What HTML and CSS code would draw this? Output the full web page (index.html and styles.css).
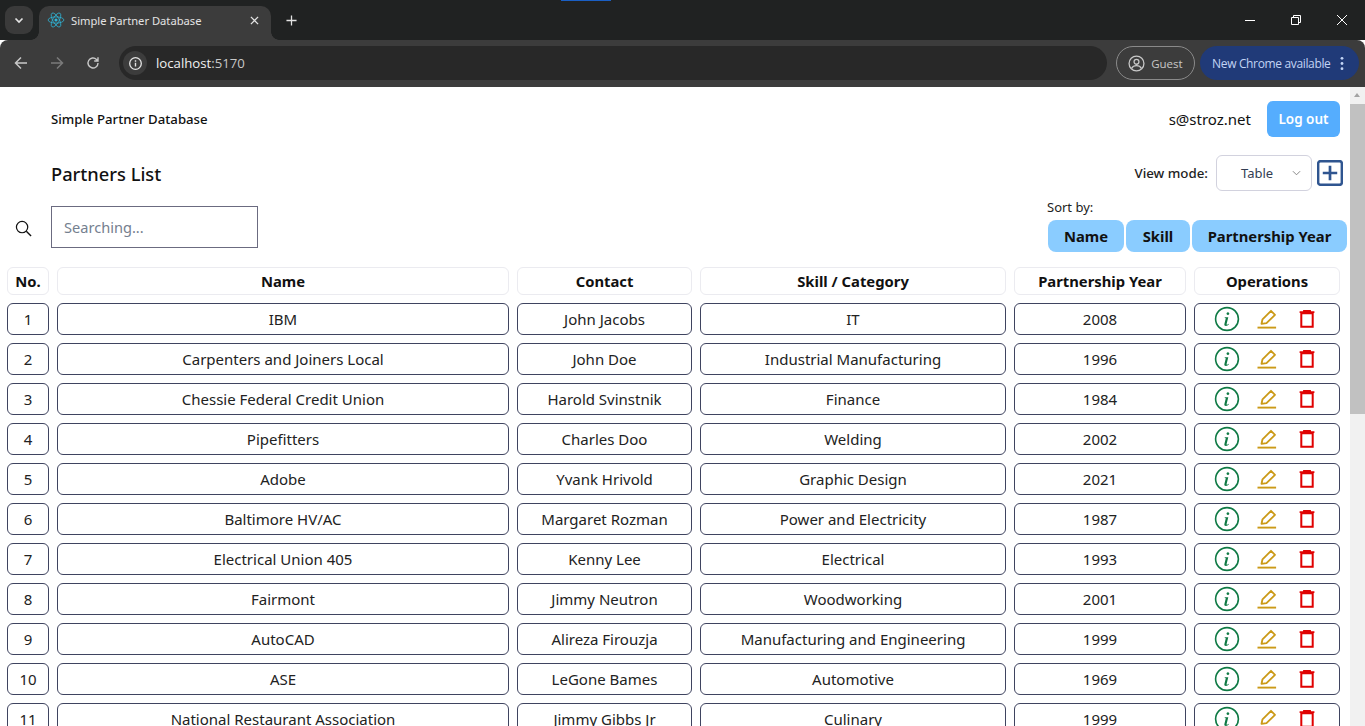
FILE: index.html
```html
<!DOCTYPE html>
<html lang="en">
<head>
<meta charset="utf-8">
<title>Simple Partner Database</title>
<link rel="stylesheet" href="styles.css">
</head>
<body>
<svg class="defs" aria-hidden="true">
  <symbol id="i-info" viewBox="0 0 26 26">
    <circle cx="13" cy="13" r="11.4" fill="none" stroke="#0f7a45" stroke-width="1.6"/>
    <path d="M13.9 6.2a1.4 1.4 0 1 0 .01 0zM10.800 11.200h3.500l-1.700 6.700c-.2.8.4 1 1 .6l1-.8.3.5c-1 1-1.900 1.700-3 1.700-1.300 0-1.800-.8-1.500-2l1.400-5.600-1.100-.2z" fill="#0f7a45"/>
  </symbol>
  <symbol id="i-edit" viewBox="0 0 22 22">
    <path d="M5.500 15.800l1-4.500L15 2.800l4 4-8.500 8.300z" fill="none" stroke="#cb9a18" stroke-width="1.800" stroke-linejoin="round"/>
    <path d="M1.500 19.600h18.600" stroke="#cb9a18" stroke-width="1.900"/>
  </symbol>
  <symbol id="i-trash" viewBox="0 0 18 20">
    <path d="M1.600 3.200h14.800M6 3V1.800h6V3" fill="none" stroke="#e00000" stroke-width="1.800"/>
    <path d="M3.300 4.200h11.400v13.500H3.300z" fill="none" stroke="#e00000" stroke-width="2"/>
  </symbol>
</svg>

<div class="browser">
  <header class="tabstrip">
    <div class="tab-search"><svg viewBox="0 0 12 12" class="tab-chevron"><path d="M2.500 4.500L6 8l3.500-3.500" fill="none" stroke="#e3e3e3" stroke-width="1.700"/></svg></div>
    <div class="tab">
      <svg class="react" viewBox="-12 -12 24 24">
        <circle r="2.100" fill="#2fb5d8"/>
        <g fill="none" stroke="#2fb5d8" stroke-width="1">
          <ellipse rx="10.500" ry="4.200"/>
          <ellipse rx="10.500" ry="4.200" transform="rotate(60)"/>
          <ellipse rx="10.500" ry="4.200" transform="rotate(120)"/>
        </g>
      </svg>
      <span class="tab-title">Simple Partner Database</span>
      <svg class="tab-close" viewBox="0 0 10 10"><path d="M1 1l8 8M9 1l-8 8" stroke="#e3e3e3" stroke-width="1.400"/></svg>
    </div>
    <svg class="tab-new" viewBox="0 0 12 12"><path d="M6 .5v11M.5 6h11" stroke="#e3e3e3" stroke-width="1.400"/></svg>
    <div class="win-controls">
      <svg viewBox="0 0 12 12"><path d="M1 6.500h10" stroke="#fff" stroke-width="1"/></svg>
      <svg viewBox="0 0 12 12"><path d="M1.500 3.500h7v7h-7zM3.500 3.500v-2h7v7h-2" fill="none" stroke="#fff" stroke-width="1"/></svg>
      <svg viewBox="0 0 12 12"><path d="M1 1l10 10M11 1L1 11" stroke="#fff" stroke-width="1"/></svg>
    </div>
  </header>
  <nav class="toolbar">
    <svg class="nav-ico" viewBox="0 0 14 14"><path d="M13 7H2M7 1.500L1.500 7 7 12.500" fill="none" stroke="#c7c7c7" stroke-width="1.500"/></svg>
    <svg class="nav-ico" viewBox="0 0 14 14"><path d="M1 7h11M7 1.500L12.500 7 7 12.500" fill="none" stroke="#7b7b7b" stroke-width="1.500"/></svg>
    <svg class="nav-ico" viewBox="0 0 14 14"><path d="M12 7a5 5 0 1 1-1.500-3.600L12 5M12 1.200V5H8.200" fill="none" stroke="#c7c7c7" stroke-width="1.400"/></svg>
    <div class="omnibox">
      <span class="site-info"><svg viewBox="0 0 16 16"><circle cx="8" cy="8" r="6.200" fill="none" stroke="#e3e3e3" stroke-width="1.400"/><path d="M8 7.200v4M8 4.400V6" stroke="#e3e3e3" stroke-width="1.500"/></svg></span>
      <span class="url"><span class="url-host">localhost</span>:5170</span>
    </div>
    <div class="guest">
      <svg viewBox="0 0 16 16"><circle cx="8" cy="8" r="7" fill="none" stroke="#c7c7c7" stroke-width="1.200"/><circle cx="8" cy="6.400" r="2.300" fill="none" stroke="#c7c7c7" stroke-width="1.200"/><path d="M3.400 12.600c1-2 2.800-2.600 4.600-2.600s3.600.6 4.600 2.600" fill="none" stroke="#c7c7c7" stroke-width="1.200"/></svg>
      <span>Guest</span>
    </div>
    <div class="update">
      <span>New Chrome available</span>
      <svg viewBox="0 0 4 16"><circle cx="2" cy="2.500" r="1.500" fill="#c2d4f5"/><circle cx="2" cy="8" r="1.500" fill="#c2d4f5"/><circle cx="2" cy="13.500" r="1.500" fill="#c2d4f5"/></svg>
    </div>
  </nav>
  <div class="viewport">
    <main class="page">
      <div class="topbar">
        <span class="brand">Simple Partner Database</span>
        <div class="account">
          <span class="email">s@stroz.net</span>
          <button class="logout">Log out</button>
        </div>
      </div>
      <div class="titlebar">
        <h1 class="page-title">Partners List</h1>
        <div class="view-tools">
          <span class="view-label">View mode:</span>
          <div class="select"><span>Table</span><svg viewBox="0 0 10 6"><path d="M1 1l4 4 4-4" fill="none" stroke="#7a7a7a" stroke-width="1"/></svg></div>
          <svg class="add" viewBox="0 0 27 27"><rect x="1.200" y="1.200" width="24.600" height="24.600" rx="2.500" fill="none" stroke="#2f5590" stroke-width="2.600"/><path d="M13.500 6v15M6 13.500h15" stroke="#2f5590" stroke-width="2.800"/></svg>
        </div>
      </div>
      <div class="filterbar">
        <svg class="search-ico" viewBox="0 0 18 18"><circle cx="7.500" cy="7.500" r="6" fill="none" stroke="#111" stroke-width="1.300"/><path d="M12 12l5 5" stroke="#111" stroke-width="1.500"/></svg>
        <div class="search-box">Searching...</div>
        <div class="sort">
          <span class="sort-label">Sort by:</span>
          <div class="sort-buttons">
            <button class="sort-btn sort-name">Name</button>
            <button class="sort-btn sort-skill">Skill</button>
            <button class="sort-btn sort-year">Partnership Year</button>
          </div>
        </div>
      </div>
      <div class="table">
        <div class="th">No.</div><div class="th">Name</div><div class="th">Contact</div><div class="th">Skill / Category</div><div class="th">Partnership Year</div><div class="th">Operations</div>

        <div class="td">1</div><div class="td">IBM</div><div class="td">John Jacobs</div><div class="td">IT</div><div class="td">2008</div>
        <div class="td ops"><svg class="op-info"><use href="#i-info"/></svg><svg class="op-edit"><use href="#i-edit"/></svg><svg class="op-trash"><use href="#i-trash"/></svg></div>

        <div class="td">2</div><div class="td">Carpenters and Joiners Local</div><div class="td">John Doe</div><div class="td">Industrial Manufacturing</div><div class="td">1996</div>
        <div class="td ops"><svg class="op-info"><use href="#i-info"/></svg><svg class="op-edit"><use href="#i-edit"/></svg><svg class="op-trash"><use href="#i-trash"/></svg></div>

        <div class="td">3</div><div class="td">Chessie Federal Credit Union</div><div class="td">Harold Svinstnik</div><div class="td">Finance</div><div class="td">1984</div>
        <div class="td ops"><svg class="op-info"><use href="#i-info"/></svg><svg class="op-edit"><use href="#i-edit"/></svg><svg class="op-trash"><use href="#i-trash"/></svg></div>

        <div class="td">4</div><div class="td">Pipefitters</div><div class="td">Charles Doo</div><div class="td">Welding</div><div class="td">2002</div>
        <div class="td ops"><svg class="op-info"><use href="#i-info"/></svg><svg class="op-edit"><use href="#i-edit"/></svg><svg class="op-trash"><use href="#i-trash"/></svg></div>

        <div class="td">5</div><div class="td">Adobe</div><div class="td">Yvank Hrivold</div><div class="td">Graphic Design</div><div class="td">2021</div>
        <div class="td ops"><svg class="op-info"><use href="#i-info"/></svg><svg class="op-edit"><use href="#i-edit"/></svg><svg class="op-trash"><use href="#i-trash"/></svg></div>

        <div class="td">6</div><div class="td">Baltimore HV/AC</div><div class="td">Margaret Rozman</div><div class="td">Power and Electricity</div><div class="td">1987</div>
        <div class="td ops"><svg class="op-info"><use href="#i-info"/></svg><svg class="op-edit"><use href="#i-edit"/></svg><svg class="op-trash"><use href="#i-trash"/></svg></div>

        <div class="td">7</div><div class="td">Electrical Union 405</div><div class="td">Kenny Lee</div><div class="td">Electrical</div><div class="td">1993</div>
        <div class="td ops"><svg class="op-info"><use href="#i-info"/></svg><svg class="op-edit"><use href="#i-edit"/></svg><svg class="op-trash"><use href="#i-trash"/></svg></div>

        <div class="td">8</div><div class="td">Fairmont</div><div class="td">Jimmy Neutron</div><div class="td">Woodworking</div><div class="td">2001</div>
        <div class="td ops"><svg class="op-info"><use href="#i-info"/></svg><svg class="op-edit"><use href="#i-edit"/></svg><svg class="op-trash"><use href="#i-trash"/></svg></div>

        <div class="td">9</div><div class="td">AutoCAD</div><div class="td">Alireza Firouzja</div><div class="td">Manufacturing and Engineering</div><div class="td">1999</div>
        <div class="td ops"><svg class="op-info"><use href="#i-info"/></svg><svg class="op-edit"><use href="#i-edit"/></svg><svg class="op-trash"><use href="#i-trash"/></svg></div>

        <div class="td">10</div><div class="td">ASE</div><div class="td">LeGone Bames</div><div class="td">Automotive</div><div class="td">1969</div>
        <div class="td ops"><svg class="op-info"><use href="#i-info"/></svg><svg class="op-edit"><use href="#i-edit"/></svg><svg class="op-trash"><use href="#i-trash"/></svg></div>

        <div class="td">11</div><div class="td">National Restaurant Association</div><div class="td">Jimmy Gibbs Jr</div><div class="td">Culinary</div><div class="td">1999</div>
        <div class="td ops"><svg class="op-info"><use href="#i-info"/></svg><svg class="op-edit"><use href="#i-edit"/></svg><svg class="op-trash"><use href="#i-trash"/></svg></div>
      </div>
    </main>
    <aside class="scrollbar">
      <div class="scroll-arrow"></div>
      <div class="scroll-thumb"></div>
    </aside>
  </div>
</div>
</body>
</html>
```

FILE: styles.css
```css
* { box-sizing: border-box; }
html, body { margin: 0; height: 100%; overflow: hidden; }
body { font-family: "Noto Sans", "Open Sans", sans-serif; color: #111; background: #fff; }
.defs { display: none; }
button { font-family: inherit; border: 0; cursor: pointer; }

.browser { display: flex; flex-direction: column; height: 100vh; }

/* Tab strip */
.tabstrip { height: 40px; flex: none; background: #202222; display: flex; align-items: center; color: #e3e3e3; padding-left: 5px; position: relative; }
.tabstrip::before { content: ""; position: absolute; left: 561px; top: 0; width: 50px; height: 1px; background: #1a5fc4; }
.tab-search { width: 28px; height: 28px; border-radius: 9px; background: #3a3a3a; display: flex; align-items: center; justify-content: center; }
.tab-chevron { width: 12px; height: 12px; }
.tab { width: 232px; height: 34px; margin-top: 6px; margin-left: 6px; border-radius: 10px 10px 0 0; background: #3c3c3c; display: flex; align-items: center; padding: 0 0 6px 8px; position: relative; }
.tab::before, .tab::after { content: ""; position: absolute; bottom: 0; width: 8px; height: 8px; }
.tab::before { left: -8px; background: radial-gradient(circle at 0 0, transparent 7.500px, #3c3c3c 8px); }
.tab::after { right: -8px; background: radial-gradient(circle at 100% 0, transparent 7.500px, #3c3c3c 8px); }
.react { width: 18px; height: 18px; flex: none; }
.tab-title { font-size: 11.200px; margin-left: 6px; color: #e3e3e3; white-space: nowrap; flex: 1; }
.tab-close { width: 9px; height: 9px; flex: none; margin-right: 12px; }
.tab-new { width: 11px; height: 11px; margin-left: 15px; }
.win-controls { margin-left: auto; display: flex; align-items: center; gap: 34px; padding-right: 17px; }
.win-controls svg { width: 12px; height: 12px; display: block; }

/* Toolbar */
.toolbar { height: 47px; flex: none; background: #3c3c3c; display: flex; align-items: center; padding: 0 6px 1px 14px; border-radius: 8px 8px 0 0; }
.nav-ico { width: 14px; height: 14px; margin-right: 22px; flex: none; }
.nav-ico:nth-child(3) { margin-right: 19px; }
.omnibox { width: 989px; height: 34px; border-radius: 17px; background: #282828; display: flex; align-items: center; padding-left: 4px; color: #c7c7c7; font-size: 13.200px; }
.site-info { width: 24px; height: 24px; border-radius: 50%; background: #3c3c3c; display: flex; align-items: center; justify-content: center; margin-right: 9px; }
.site-info svg { width: 15px; height: 15px; }
.url { font-family: "Open Sans", sans-serif; }
.url-host { color: #f0f0f0; }
.guest { width: 79px; height: 34px; margin-left: 9px; border: 1px solid #8a8a8a; border-radius: 17px; display: flex; align-items: center; padding-left: 11px; gap: 6px; color: #c7c7c7; font-size: 11.500px; font-family: "Open Sans", sans-serif; }
.guest svg { width: 17px; height: 17px; }
.update { width: 159px; height: 34px; margin-left: 5px; border-radius: 17px; background: #203a78; display: flex; align-items: center; padding-left: 12px; color: #c2d4f5; font-size: 12px; font-family: "Open Sans", sans-serif; white-space: nowrap; }
.update span { letter-spacing: -.35px; }
.update svg { width: 4px; height: 15px; margin-left: 10px; flex: none; }

/* Page */
.viewport { flex: 1; min-height: 0; display: flex; background: #fff; }
.page { flex: 1; min-width: 0; padding: 0 0 0 7px; overflow: hidden; }
.topbar { height: 64px; padding: 0 10px 0 44px; display: flex; align-items: center; justify-content: space-between; }
.brand { font-size: 13.200px; font-weight: 500; color: #111; }
.account { display: flex; align-items: center; gap: 16px; }
.email { font-size: 15px; color: #111; }
.logout { width: 73px; height: 36px; border-radius: 6px; background: #55adfe; color: #fff; font-size: 13.500px; font-weight: 600; }

.titlebar { height: 55px; padding: 0 7px 11px 44px; display: flex; align-items: center; justify-content: space-between; }
.page-title { margin: 0; font-size: 18.300px; font-weight: 500; color: #111; }
.view-tools { display: flex; align-items: center; }
.view-label { font-size: 13.300px; font-weight: 500; color: #222; margin-right: 8px; }
.select { width: 96px; height: 36px; border: 1px solid #d2d2de; border-radius: 6px; display: flex; align-items: center; justify-content: space-between; padding: 0 10px 0 24px; font-size: 13px; color: #333d52; }
.select svg { width: 9px; height: 6px; }
.add { width: 26px; height: 26px; margin-left: 5px; }

.filterbar { height: 61px; display: flex; align-items: flex-start; padding-left: 8px; }
.search-ico { width: 17px; height: 17px; margin-top: 14px; flex: none; }
.search-box { width: 207px; height: 42px; margin-left: 19px; border: 1px solid #6b6b80; display: flex; align-items: center; padding-left: 12px; font-size: 14.600px; color: #75808f; }
.sort { margin-left: auto; display: flex; flex-direction: column; width: 303px; margin-top: -9px; }
.sort-label { font-size: 13px; color: #222; height: 23px; line-height: 20px; }
.sort-buttons { display: flex; gap: 2px; padding-left: 1px; }
.sort-btn { height: 32px; border-radius: 8px; background: #8accff; color: #111; font-size: 14.800px; font-weight: 700; padding: 0; }
.sort-name { width: 76px; }
.sort-skill { width: 64px; }
.sort-year { width: 155px; }

.table { display: grid; grid-template-columns: 42px 452px 175px 306px 172px 146px; grid-auto-rows: 32px; grid-template-rows: 28px; gap: 8px; }
.th { border: 1px solid #ebebf0; border-radius: 6px; display: flex; align-items: center; justify-content: center; font-size: 14.800px; font-weight: 700; color: #111; }
.td { border: 1px solid #3f4460; border-radius: 6px; display: flex; align-items: center; justify-content: center; font-size: 15px; color: #222; white-space: nowrap; }
.ops { justify-content: flex-start; padding-left: 19px; }
.op-info { width: 26px; height: 26px; flex: none; }
.op-edit { width: 22px; height: 22px; flex: none; margin-left: 16px; }
.op-trash { width: 18px; height: 20px; flex: none; margin-left: 20px; }

.scrollbar { width: 15px; flex: none; background: #f1f1f1; display: flex; flex-direction: column; }
.scroll-arrow { height: 17px; position: relative; }
.scroll-arrow::after { content: ""; position: absolute; left: 4px; top: 6px; border-left: 3.500px solid transparent; border-right: 3.500px solid transparent; border-bottom: 4px solid #a3a3a3; }
.scroll-thumb { height: 310px; background: #c1c1c1; }
```
